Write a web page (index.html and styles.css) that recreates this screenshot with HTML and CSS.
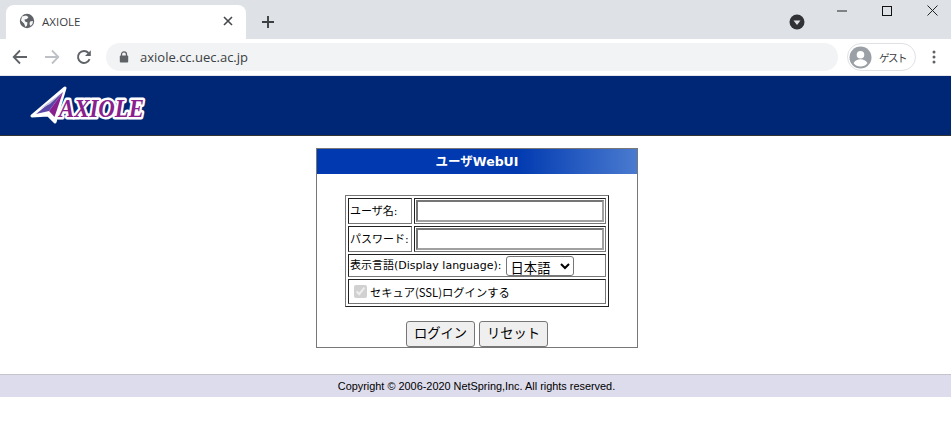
FILE: index.html
```html
<!DOCTYPE html>
<html lang="ja">
<head>
<meta charset="utf-8">
<title>AXIOLE</title>
<link rel="stylesheet" href="styles.css">
</head>
<body>
<div class="tabstrip">
  <div class="tab">
    <svg class="favicon" width="16" height="16" viewBox="0 0 16 16"><circle cx="8" cy="8" r="7.2" fill="#5f6368"/><path d="M3 3.5 7 2.5 9.5 4 8 6 5.5 6.5 6 8.5 8.5 9.5 8 12.5 6.5 14 5 10.5 2 7.5ZM11 8.5 14 8 13.5 11 11.5 13 10.5 11Z" fill="#fff" opacity=".95"/></svg>
    <span class="tab-title">AXIOLE</span>
    <svg class="tab-close" width="10" height="10" viewBox="0 0 10 10"><path d="M1 1 9 9M9 1 1 9" stroke="#45484c" stroke-width="1.6"/></svg>
  </div>
  <svg class="newtab" width="14" height="14" viewBox="0 0 14 14"><path d="M7 1V13M1 7H13" stroke="#3c4043" stroke-width="1.9"/></svg>
  <div class="strip-spacer"></div>
  <svg class="profile-dot" width="16" height="16" viewBox="0 0 16 16"><circle cx="8" cy="8" r="7.5" fill="#303236"/><path d="M4.5 6.5H11.5L8 11Z" fill="#dee1e6"/></svg>
  <div class="winctl">
    <svg width="10" height="2" viewBox="0 0 10 2"><path d="M0 1H10" stroke="#222" stroke-width="1"/></svg>
  </div>
  <div class="winctl">
    <svg width="10" height="10" viewBox="0 0 10 10"><rect x=".5" y=".5" width="9" height="9" fill="none" stroke="#111" stroke-width="1"/></svg>
  </div>
  <div class="winctl">
    <svg width="11" height="11" viewBox="0 0 11 11"><path d="M.5.5 10.5 10.5M10.5.5.5 10.5" stroke="#222" stroke-width="1"/></svg>
  </div>
</div>
<div class="toolbar">
  <svg class="navicon" width="16" height="16" viewBox="0 0 16 16"><path d="M15 8H2M8 1.5 1.7 8 8 14.5" fill="none" stroke="#5f6368" stroke-width="1.8"/></svg>
  <svg class="navicon" width="16" height="16" viewBox="0 0 16 16"><path d="M1 8H14M8 1.5 14.3 8 8 14.5" fill="none" stroke="#bdc1c6" stroke-width="1.8"/></svg>
  <svg class="navicon" width="16" height="16" viewBox="0 0 16 16"><path d="M13.6 10.2A6 6 0 1 1 12.5 4" fill="none" stroke="#5f6368" stroke-width="1.9"/><path d="M14.8 1.2V7H9Z" fill="#5f6368"/></svg>
  <div class="omnibox">
    <svg width="10" height="12" viewBox="0 0 10 12"><path d="M2.5 5V3.4a2.5 2.5 0 0 1 5 0V5" fill="none" stroke="#5f6368" stroke-width="1.3"/><rect x=".8" y="4.6" width="8.4" height="7" rx="1" fill="#5f6368"/></svg>
    <span class="url">axiole.cc.uec.ac.jp</span>
  </div>
  <div class="guest">
    <svg width="23" height="23" viewBox="0 0 23 23"><circle cx="11.5" cy="11.5" r="11" fill="#9aa0a6"/><circle cx="11.5" cy="8.8" r="3.8" fill="#fff"/><path d="M4.6 17.2c1.4-2.8 4.2-3.9 6.9-3.9s5.5 1.1 6.900 3.9a9 9 0 0 1-13.800 0Z" fill="#fff"/></svg>
    <span class="guest-label">ゲスト</span>
  </div>
  <svg class="menu" width="4" height="14" viewBox="0 0 4 14"><circle cx="2" cy="2" r="1.5" fill="#5f6368"/><circle cx="2" cy="7" r="1.5" fill="#5f6368"/><circle cx="2" cy="12" r="1.5" fill="#5f6368"/></svg>
</div>
<header class="site-header">
  <svg class="logo" width="130" height="42" viewBox="0 0 130 42">
    <path d="M36 2 26 36 19 29 3 30Z" fill="#fff" stroke="#fff" stroke-width="3" stroke-linejoin="round"/>
    <path d="M34 6 7 28 20 25Z" fill="#5a46a6"/>
    <path d="M34 6 20 25 25.500 31Z" fill="#8a1f8e"/>
    <path d="M34 6 11 23 21 18Z" fill="#c3bedd"/>
    <text class="logo-text" x="30" y="31" textLength="85" lengthAdjust="spacingAndGlyphs">AXIOLE</text>
  </svg>
</header>
<main class="page">
  <form class="login-box">
    <h1 class="login-title">ユーザWebUI</h1>
    <div class="login-body">
      <div class="login-table">
        <div class="row row-field">
          <div class="cell cell-label">ユーザ名:</div>
          <div class="cell cell-input"><input class="text-input" type="text"></div>
        </div>
        <div class="row row-field">
          <div class="cell cell-label">パスワード:</div>
          <div class="cell cell-input"><input class="text-input" type="password"></div>
        </div>
        <div class="row">
          <div class="cell cell-wide cell-lang">表示言語(Display language):
            <select class="lang-select"><option>日本語</option></select>
          </div>
        </div>
        <div class="row">
          <div class="cell cell-wide cell-ssl">
            <input class="ssl-check" type="checkbox" checked disabled>
            <span>セキュア(SSL)ログインする</span>
          </div>
        </div>
      </div>
      <div class="actions">
        <button class="btn" type="button">ログイン</button>
        <button class="btn" type="button">リセット</button>
      </div>
    </div>
  </form>
</main>
<footer class="site-footer">Copyright © 2006-2020 NetSpring,Inc. All rights reserved.</footer>
</body>
</html>
```
FILE: styles.css
```css
* { box-sizing: border-box; }
html, body { margin: 0; padding: 0; background: #fff; }
body { font-family: "DejaVu Sans", "Noto Sans CJK JP", sans-serif; font-size: 11px; color: #000; overflow: hidden; }

.tabstrip { height: 39px; background: #dee1e6; display: flex; align-items: flex-start; overflow: hidden; }
.tab { width: 240px; height: 34px; margin: 5px 0 0 6px; padding: 0 10px 0 13px; background: #fff; border-radius: 8px 8px 0 0; display: flex; align-items: center; }
.favicon { flex: none; margin-top: -2px; }
.tab-title { flex: 1; margin-left: 7px; font: 11.5px "Open Sans", sans-serif; color: #3c4043; margin-top: -2px; }
.tab-close { flex: none; margin: -2px 3px 0 0; }
.newtab { flex: none; margin: 15px 0 0 15px; }
.strip-spacer { flex: 1; }
.profile-dot { flex: none; margin: 14px 14.5px 0 0; }
.winctl { width: 45px; height: 21px; display: flex; align-items: center; justify-content: center; flex: none; }
.winctl:last-child { margin-right: -3.5px; }

.toolbar { background: #fff; display: flex; align-items: center; padding-left: 12px; border-bottom: 1px solid #e4e6ea; height: 37px; }
.navicon { flex: none; margin-right: 16px; }
.omnibox { flex: none; width: 732px; height: 28px; margin-left: -2px; padding-left: 13px; border-radius: 14px; background: #f1f3f4; display: flex; align-items: center; gap: 11px; }
.url { font: 13px "Open Sans", sans-serif; color: #3c4043; }
.guest { flex: none; width: 69px; height: 28px; margin-left: 9px; padding-left: 1px; border: 1px solid #dfe1e5; border-radius: 14px; display: flex; align-items: center; gap: 7px; }
.guest-label { font: 10.5px "Noto Sans CJK JP", sans-serif; letter-spacing: -1.5px; color: #3c4043; }
.menu { flex: none; margin-left: 16px; }

.site-header { height: 60px; background: #002776; border-bottom: 1px solid #333; padding: 10px 0 0 29px; display: flex; align-items: flex-start; }
.logo { display: block; }
.logo-text { font: italic bold 26px "Liberation Serif", serif; fill: #8a1f8e; stroke: #fff; stroke-width: 5px; paint-order: stroke; stroke-linejoin: round; }

.page { padding: 12px 0 0 3px; display: flex; justify-content: center; }
.login-box { width: 322px; height: 200px; border: 1px solid #777; }
.login-title { margin: 0; height: 25px; text-align: center; font: bold 12.5px/25px "DejaVu Sans", "Noto Sans CJK JP", sans-serif; color: #fff; background: linear-gradient(90deg, #0039b0 0, #0039b0 62%, #4a7bd0 100%); }
.login-body { padding-top: 21px; display: flex; flex-direction: column; align-items: center; }
.login-table { width: 264px; height: 112px; border: 1px solid; border-color: #777 #222 #222 #777; padding: 2px; display: flex; flex-direction: column; gap: 2px; }
.row { display: flex; gap: 2px; }
.row-field { height: 26px; }
.cell { border: 1px solid; border-color: #222 #777 #777 #222; display: flex; align-items: center; white-space: nowrap; }
.cell-label { width: 64px; padding: 0 0 3px 1px; }
.cell-input { width: 192px; justify-content: center; }
.cell-wide { width: 258px; }
.cell-lang { height: 23px; padding: 0 0 3px 1px; gap: 4px; }
.cell-ssl { height: 25px; padding: 1px 0 0 5px; gap: 3px; font-family: "Noto Sans CJK JP", sans-serif; font-size: 11.3px; }
.text-input { width: 188px; height: 22px; border: 2px solid; border-color: #767676 #a0a0a0 #a0a0a0 #767676; background: #fff; padding: 1px 2px; }
.lang-select { width: 68px; height: 20px; margin-top: 3px; font: 13.3px "Noto Sans CJK JP", sans-serif; padding: 0; border: 1px solid #767676; border-radius: 3px; background: #fff; color: #000; }
.ssl-check { width: 13px; height: 13px; margin: -1px 0 0; }
.actions { margin-top: 14px; display: flex; gap: 4px; }
.btn { width: 69px; height: 26px; padding: 0 0 3px; font: 13.3px "Noto Sans CJK JP", sans-serif; color: #000; background: #efefef; border: 1px solid #767676; border-radius: 3px; }

.site-footer { margin-top: 26px; height: 23px; padding-left: 2px; background: #dddcec; border-top: 1px solid #c4c4cc; text-align: center; font: 10.9px/22px "Liberation Sans", sans-serif; color: #000; }
```
